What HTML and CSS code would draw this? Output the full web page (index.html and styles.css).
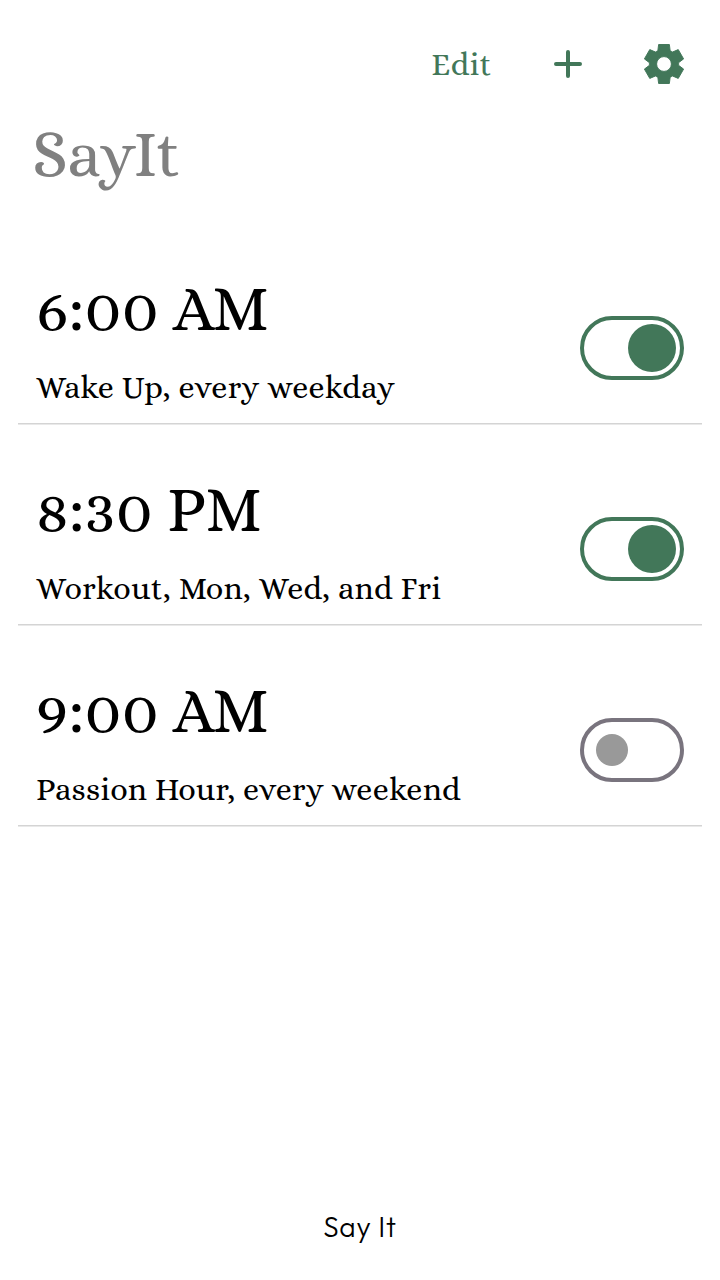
FILE: index.html
```html
<!DOCTYPE html>
<html lang="en">
<head>
<meta charset="utf-8">
<title>SayIt</title>
<link rel="stylesheet" href="styles.css">
</head>
<body>
<header class="toolbar">
  <span class="edit">Edit</span>
  <svg class="plus" width="28" height="28" viewBox="0 0 28 28"><path d="M14 2v24M2 14h24"/></svg>
  <svg class="gear" width="48" height="48" viewBox="0 0 24 24"><path transform="translate(.3 .3) scale(.975)" d="M9.25 22l-.4-3.2q-.325-.125-.612-.3t-.563-.375L4.7 19.375l-2.75-4.75 2.575-1.95Q4.5 12.5 4.5 12.338v-.675q0-.163.025-.338L1.95 9.375l2.75-4.75 2.975 1.25q.275-.2.575-.375t.6-.3l.4-3.2h5.5l.4 3.2q.325.125.613.3t.562.375l2.975-1.25 2.75 4.75-2.575 1.95q.025.175.025.338v.675q0 .162-.025.337l2.575 1.95-2.75 4.75-2.975-1.25q-.275.2-.575.375t-.6.3l-.4 3.2zM12 15.8a3.8 3.8 0 1 0 0-7.6 3.8 3.8 0 0 0 0 7.6z"/></svg>
</header>
<h1 class="title">SayIt</h1>
<main class="alarms">
  <section class="alarm">
    <div class="copy">
      <div class="time">6:00 AM</div>
      <div class="label">Wake Up, every weekday</div>
    </div>
    <span class="switch on"></span>
  </section>
  <section class="alarm">
    <div class="copy">
      <div class="time">8:30 PM</div>
      <div class="label list">Workout, Mon, Wed, and Fri</div>
    </div>
    <span class="switch on"></span>
  </section>
  <section class="alarm">
    <div class="copy">
      <div class="time">9:00 AM</div>
      <div class="label long">Passion Hour, every weekend</div>
    </div>
    <span class="switch"></span>
  </section>
</main>
<footer class="footer">Say It</footer>
</body>
</html>
```
FILE: styles.css
```css
* { box-sizing: border-box; }

body {
  margin: 0;
  height: 1280px;
  background: #fff;
  color: #000;
  font-family: Alice, "Liberation Serif", serif;
  display: flex;
  flex-direction: column;
}

svg { display: block; flex: none; }

.toolbar {
  height: 112px;
  padding: 40px 32px 0 0;
  display: flex;
  align-items: flex-start;
  justify-content: flex-end;
}

.edit { margin: 4px 62px 0 0; font-size: 32px; line-height: 40px; letter-spacing: 0.4px; color: #427759; }
.plus { margin: 10px 58px 0 0; fill: none; stroke: #427759; stroke-width: 4; stroke-linecap: round; }
.gear { fill: #427759; stroke: #427759; stroke-width: 0.5; stroke-linejoin: round; }

.title {
  margin: 0;
  height: 96px;
  padding: 2px 0 0 32px;
  font-size: 66px;
  line-height: 80px;
  letter-spacing: -0.2px;
  font-weight: 400;
  color: #808080;
}

.alarms { margin: 16px 18px 0; }

.alarm {
  height: 201px;
  display: flex;
  justify-content: space-between;
  padding: 0 18px;
  background: linear-gradient(#d4d4d4 50%, #e9e9e9 50%) bottom / 100% 2px no-repeat;
}

.copy { padding-top: 47px; white-space: nowrap; }
.time { font-size: 64px; line-height: 76px; letter-spacing: -0.1px; }
.label { margin-top: 20px; font-size: 32px; line-height: 40px; letter-spacing: 0.38px; }
.label.list { letter-spacing: 0.42px; }
.label.long { letter-spacing: 0.33px; }

.switch {
  width: 104px;
  height: 64px;
  margin-top: 92px;
  padding: 0 12px;
  border: 4px solid #79747e;
  border-radius: 32px;
  display: flex;
  align-items: center;
}

.switch::before {
  content: "";
  width: 32px;
  height: 32px;
  border-radius: 50%;
  background: #999;
}

.switch.on { border-color: #427759; justify-content: flex-end; padding: 0 4px; }
.switch.on::before { width: 48px; height: 48px; background: #427759; }

.footer {
  margin-top: auto;
  height: 73px;
  text-align: center;
  font: 350 28px/40px Outfit, Lato, sans-serif;
  letter-spacing: 0.8px;
}
```
